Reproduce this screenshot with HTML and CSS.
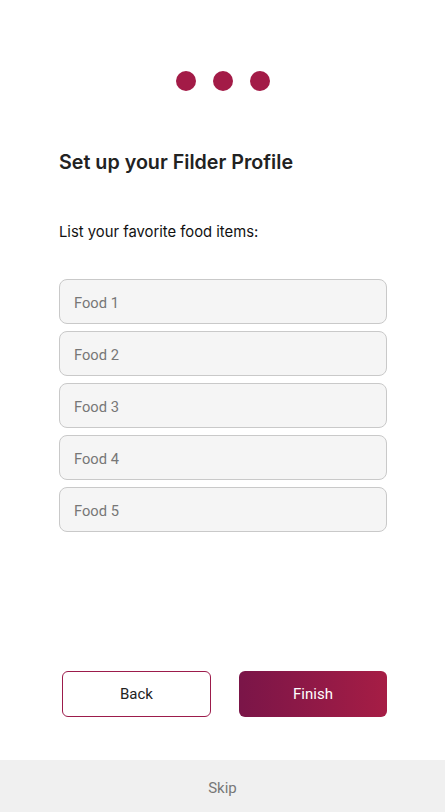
FILE: index.html
```
<!DOCTYPE html>
<html>
<head>
<meta charset="utf-8">
<link rel="stylesheet" href="styles.css">
</head>
<body>
<div class="page">
  <main class="main">
    <div class="dots">
      <span class="dot"></span><span class="dot"></span><span class="dot"></span>
    </div>
    <h1 class="title">Set up your Filder Profile</h1>
    <p class="label">List your favorite food items:</p>
    <div class="fields">
      <input class="field" placeholder="Food 1">
      <input class="field" placeholder="Food 2">
      <input class="field" placeholder="Food 3">
      <input class="field" placeholder="Food 4">
      <input class="field" placeholder="Food 5">
    </div>
  </main>
  <div class="actions">
    <button class="btn btn-back">Back</button>
    <button class="btn btn-finish">Finish</button>
  </div>
  <footer class="skip">Skip</footer>
</div>
</body>
</html>
```
FILE: styles.css
```
html, body {
  margin: 0;
  padding: 0;
  background: #ffffff;
}
.page {
  height: 812px;
  display: flex;
  flex-direction: column;
  font-family: Roboto, "Liberation Sans", sans-serif;
}
.main {
  flex: 1;
  padding: 71px 58px 0 59px;
}
.dots {
  display: flex;
  justify-content: center;
  gap: 17px;
}
.dot {
  width: 20px;
  height: 20px;
  border-radius: 50%;
  background: #a31b47;
}
.title {
  margin: 59px 0 0 0;
  font-family: Inter, "Noto Sans", sans-serif;
  font-weight: 600;
  font-size: 19.7px;
  line-height: 24px;
  color: #222222;
}
.label {
  margin: 48px 0 0 0;
  font-family: Inter, "Noto Sans", sans-serif;
  font-size: 14.8px;
  line-height: 20px;
  color: #111111;
}
.fields {
  margin-top: 37px;
  display: flex;
  flex-direction: column;
  gap: 7px;
}
.field {
  box-sizing: border-box;
  width: 328px;
  height: 45px;
  border: 1px solid #c9c9c9;
  border-radius: 8px;
  background: #f5f5f5;
  padding: 3px 14px 0 14px;
  font-family: Roboto, "Liberation Sans", sans-serif;
  font-size: 14.7px;
  color: #333;
  outline: none;
}
.field::placeholder {
  color: #777777;
}
.actions {
  display: flex;
  justify-content: space-between;
  padding: 0 58px 0 62px;
  margin-bottom: 43px;
}
.btn {
  box-sizing: border-box;
  width: 149px;
  height: 46px;
  border-radius: 6px;
  font-family: Roboto, "Liberation Sans", sans-serif;
  font-size: 15px;
  cursor: pointer;
}
.btn-back {
  background: #ffffff;
  border: 1px solid #9c1b4b;
  color: #222222;
}
.btn-finish {
  width: 148px;
  border: none;
  color: #ffffff;
  background: linear-gradient(90deg, #7a1548 0%, #a61d45 100%);
}
.skip {
  height: 52px;
  background: #f0f0f0;
  display: flex;
  align-items: center;
  justify-content: center;
  padding-top: 3px;
  box-sizing: border-box;
  font-size: 15px;
  color: #777777;
}
```
